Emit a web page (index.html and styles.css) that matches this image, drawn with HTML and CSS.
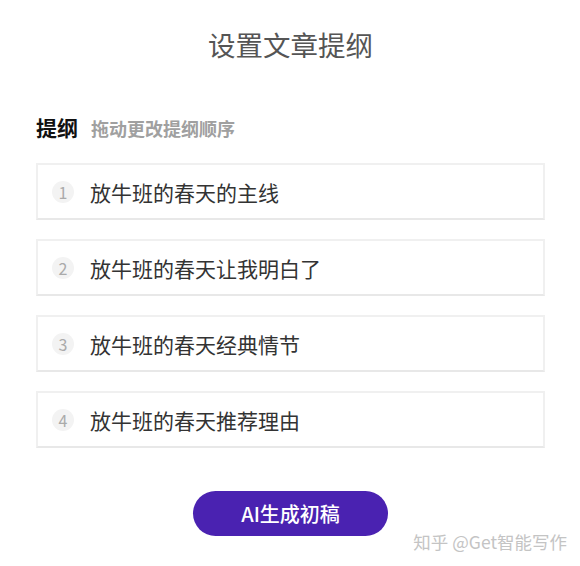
FILE: index.html
```html
<!DOCTYPE html>
<html>

<head>
    <meta charset="utf-8">
    <title>设置文章提纲</title>
    <link rel="stylesheet" href="styles.css">
</head>

<body>
    <div class="mainWrapper">
        <h1 class="pageTitle">设置文章提纲</h1>
        <div class="outlineHead">
            <span class="outlineLabel">提纲</span>
            <span class="outlineHint">拖动更改提纲顺序</span>
        </div>
        <ul class="outlineList">
            <li class="outlineItem"><span class="itemNo">1</span><span class="itemText">放牛班的春天的主线</span></li>
            <li class="outlineItem"><span class="itemNo">2</span><span class="itemText">放牛班的春天让我明白了</span></li>
            <li class="outlineItem"><span class="itemNo">3</span><span class="itemText">放牛班的春天经典情节</span></li>
            <li class="outlineItem"><span class="itemNo">4</span><span class="itemText">放牛班的春天推荐理由</span></li>
        </ul>
        <div class="actions">
            <button class="generateBtn" type="button">AI生成初稿</button>
        </div>
        <div class="watermark">知乎 @Get智能写作</div>
    </div>
</body>

</html>
```

FILE: styles.css
```css
body {
    margin: 0;
    background-color: #fff;
    font-family: "Noto Sans CJK SC", "Noto Sans", sans-serif;
}

.mainWrapper {
    width: 580px;
    height: 566px;
    box-sizing: border-box;
    padding: 22px 35px 0 36px;
}

.pageTitle {
    margin: 0;
    text-align: center;
    font-size: 27.5px;
    font-weight: normal;
    line-height: 44px;
    color: #555;
}

.outlineHead {
    margin-top: 46px;
    display: flex;
    align-items: baseline;
    gap: 13px;
    height: 30px;
}

.outlineLabel {
    font-size: 21px;
    font-weight: bold;
    color: #111;
}

.outlineHint {
    font-size: 18px;
    font-weight: bold;
    color: #a0a0a0;
}

.outlineList {
    list-style: none;
    margin: 21px 0 0;
    padding: 0;
    display: flex;
    flex-direction: column;
    gap: 19px;
}

.outlineItem {
    height: 57px;
    box-sizing: border-box;
    border: 2px solid #f0f0f0;
    border-bottom-color: #e8e8e8;
    display: flex;
    align-items: center;
    padding-left: 14px;
}

.itemNo {
    width: 22px;
    height: 22px;
    border-radius: 50%;
    background-color: #f3f3f3;
    color: #aaa;
    font-size: 16px;
    line-height: 22px;
    text-align: center;
    margin-right: 16px;
}

.itemText {
    font-size: 21px;
    color: #333;
}

.actions {
    margin-top: 43px;
    display: flex;
    justify-content: center;
}

.generateBtn {
    width: 195px;
    height: 45px;
    border: none;
    border-radius: 23px;
    background-color: #4a22b1;
    color: #fff;
    font-family: "Noto Sans CJK SC", "Noto Sans", sans-serif;
    font-size: 20px;
    font-weight: 500;
}

.watermark {
    margin-top: -7px;
    text-align: right;
    margin-right: -22px;
    font-size: 17.5px;
    color: #c4c4c4;
}
```
